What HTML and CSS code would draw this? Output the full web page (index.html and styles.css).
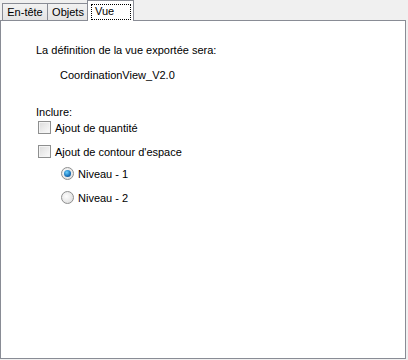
FILE: index.html
```html
<!DOCTYPE html>
<html lang="fr">
<head>
    <meta charset="UTF-8">
    <title>Vue</title>
    <link rel="stylesheet" href="styles.css">
</head>
<body>
    <div class="tabs">
        <div class="tab tab-header">En-tête</div>
        <div class="tab tab-objects">Objets</div>
        <div class="tab active"><span class="focus">Vue</span></div>
    </div>
    <div class="panel">
        <p class="label">La définition de la vue exportée sera:</p>
        <p class="value">CoordinationView_V2.0</p>
        <p class="label include">Inclure:</p>
        <label class="check"><span class="box"></span>Ajout de quantité</label>
        <label class="check"><span class="box"></span>Ajout de contour d'espace</label>
        <div class="radios">
            <label class="radio"><span class="dot on"></span>Niveau - 1</label>
            <label class="radio"><span class="dot"></span>Niveau - 2</label>
        </div>
    </div>
</body>
</html>
```

FILE: styles.css
```css
body {
    margin: 0;
    width: 408px;
    height: 360px;
    background-color: #f0f0f0;
    font-family: "Liberation Sans", Arial, sans-serif;
    font-size: 11px;
    color: #000;
}
.tabs {
    display: flex;
    align-items: flex-end;
    height: 20px;
    padding-left: 2px;
}
.tab {
    height: 17px;
    line-height: 16px;
    text-align: center;
    box-sizing: border-box;
    border: 1px solid #898c95;
    border-bottom: none;
    margin-right: -1px;
    background: linear-gradient(#f2f2f2, #e4e4e4);
}
.tab-header {
    width: 46px;
}
.tab-objects {
    width: 42px;
}
.tab.active {
    width: 47px;
    height: 21px;
    margin-bottom: -1px;
    margin-left: -1px;
    padding: 3px 2px 0 3px;
    text-align: left;
    background: #fff;
    position: relative;
}
.focus {
    display: block;
    border: 1px dotted #000;
    height: 16px;
    width: 40px;
    line-height: 13px;
    padding: 0 0 0 3px;
    box-sizing: border-box;
}
.panel {
    height: 339px;
    width: 406px;
    box-sizing: border-box;
    border: 1px solid #898c95;
    background: #fff;
    padding: 23px 0 0 35px;
}
p {
    margin: 0;
}
.value {
    margin: 13px 0 0 24px;
}
.include {
    margin-top: 25px;
}
.check, .radio {
    display: flex;
    align-items: center;
    height: 13px;
}
.check {
    margin-top: 3px;
    margin-left: 2px;
}
.check + .check {
    margin-top: 11px;
}
.box {
    width: 13px;
    height: 13px;
    box-sizing: border-box;
    border: 1px solid #8e8f8f;
    background: linear-gradient(135deg, #dcdcdc, #fbfbfb);
    box-shadow: inset 0 0 0 1px #f4f4f4;
    margin-right: 4px;
}
.radios {
    margin: 9px 0 0 25px;
}
.radio + .radio {
    margin-top: 11px;
}
.dot {
    width: 13px;
    height: 13px;
    box-sizing: border-box;
    border-radius: 50%;
    border: 1px solid #8e8f8f;
    background: radial-gradient(circle at 40% 40%, #fdfdfd, #d8d8d8);
    margin-right: 4px;
    position: relative;
}
.dot.on::after {
    content: "";
    position: absolute;
    left: 2px;
    top: 2px;
    width: 7px;
    height: 7px;
    border-radius: 50%;
    background: radial-gradient(circle at 40% 35%, #6ad0ff, #1670b8 60%, #0b3f78);
}
```
